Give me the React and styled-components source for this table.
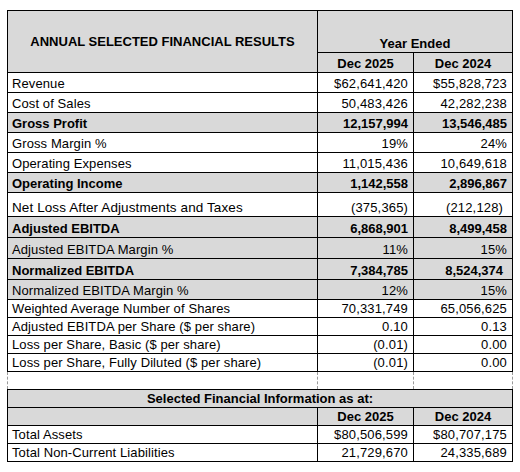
import React from "react";
import styled, { createGlobalStyle } from "styled-components";

const GlobalStyle = createGlobalStyle`
  body {
    margin: 0;
    background: #ffffff;
    font-family: "Liberation Sans", Arial, sans-serif;
  }
`;

const Page = styled.div`
  padding: 10px 0 0 7px;
`;

const Table = styled.table`
  border-collapse: collapse;
  table-layout: fixed;
  width: 505px;
  font-size: 13px;
  color: #000000;
`;

const Row = styled.tr`
  height: ${(p) => p.$h}px;
  background: ${(p) => (p.$shade ? "#d9d9d9" : "#ffffff")};
`;

const HeadCell = styled.th`
  background: #d9d9d9;
  border: 1px solid #000000;
  font-weight: 700;
  text-align: center;
  vertical-align: ${(p) => p.$valign || "bottom"};
  padding: 0 0 1px 0;
  white-space: nowrap;
`;

const Label = styled.td`
  border: 1px solid #000000;
  padding: 0 4px 1px 4px;
  text-align: left;
  vertical-align: bottom;
  white-space: nowrap;
  font-size: ${(p) => (p.$large ? 13.5 : 13)}px;
  letter-spacing: ${(p) => (p.$bold ? 0 : 0.1)}px;
  font-weight: ${(p) => (p.$bold ? 700 : 400)};
`;

const Num = styled.td`
  border: 1px solid #000000;
  padding: 0 ${(p) => (p.$inset ? 9 : 5)}px 1px 0;
  text-align: right;
  vertical-align: bottom;
  white-space: nowrap;
  letter-spacing: ${(p) => (p.$bold ? 0 : 0.15)}px;
  font-weight: ${(p) => (p.$bold ? 700 : 400)};
`;

const Spacer = styled.td`
  border-left: 1px dashed #9a9a9a;
  border-right: 1px dashed #9a9a9a;
  padding: 0;
`;

const rows = [
  { label: "Revenue", a: "$62,641,420", b: "$55,828,723", h: 20 },
  { label: "Cost of Sales", a: "50,483,426", b: "42,282,238", h: 20 },
  { label: "Gross Profit", a: "12,157,994", b: "13,546,485", h: 20, bold: true, shade: true },
  { label: "Gross Margin %", a: "19%", b: "24%", h: 20 },
  { label: "Operating Expenses", a: "11,015,436", b: "10,649,618", h: 20 },
  { label: "Operating Income", a: "1,142,558", b: "2,896,867", h: 20, bold: true, shade: true },
  { label: "Net Loss After Adjustments and Taxes", a: "(375,365)", b: "(212,128)", h: 24, large: true, bInset: true },
  { label: "Adjusted EBITDA", a: "6,868,901", b: "8,499,458", h: 21, bold: true, shade: true },
  { label: "Adjusted EBITDA Margin %", a: "11%", b: "15%", h: 21, shade: true },
  { label: "Normalized EBITDA", a: "7,384,785", b: "8,524,374", h: 21, bold: true, shade: true, bInset: true },
  { label: "Normalized EBITDA Margin %", a: "12%", b: "15%", h: 20, shade: true },
  { label: "Weighted Average Number of Shares", a: "70,331,749", b: "65,056,625", h: 18 },
  { label: "Adjusted EBITDA per Share ($ per share)", a: "0.10", b: "0.13", h: 18 },
  { label: "Loss per Share, Basic ($ per share)", a: "(0.01)", b: "0.00", h: 18 },
  { label: "Loss per Share, Fully Diluted ($ per share)", a: "(0.01)", b: "0.00", h: 18 },
];

const position = [
  { label: "Total Assets", a: "$80,506,599", b: "$80,707,175" },
  { label: "Total Non-Current Liabilities", a: "21,729,670", b: "24,335,689" },
];

const App = () => {
  return (
    <>
      <GlobalStyle />
      <Page>
        <Table>
          <colgroup>
            <col style={{ width: 310 }} />
            <col style={{ width: 96 }} />
            <col style={{ width: 99 }} />
          </colgroup>
          <tbody>
            <Row $h={42}>
              <HeadCell rowSpan={2} $valign="middle">
                ANNUAL SELECTED FINANCIAL RESULTS
              </HeadCell>
              <HeadCell colSpan={2}>Year Ended</HeadCell>
            </Row>
            <Row $h={20}>
              <HeadCell>Dec 2025</HeadCell>
              <HeadCell>Dec 2024</HeadCell>
            </Row>
            {rows.map((r) => (
              <Row key={r.label} $h={r.h} $shade={r.shade}>
                <Label $bold={r.bold} $large={r.large}>{r.label}</Label>
                <Num $bold={r.bold}>{r.a}</Num>
                <Num $bold={r.bold} $inset={r.bInset}>{r.b}</Num>
              </Row>
            ))}
            <Row $h={18}>
              <Spacer />
              <Spacer />
              <Spacer />
            </Row>
            <Row $h={18}>
              <HeadCell colSpan={3}>Selected Financial Information as at:</HeadCell>
            </Row>
            <Row $h={18}>
              <HeadCell />
              <HeadCell>Dec 2025</HeadCell>
              <HeadCell>Dec 2024</HeadCell>
            </Row>
            {position.map((r) => (
              <Row key={r.label} $h={18}>
                <Label>{r.label}</Label>
                <Num>{r.a}</Num>
                <Num>{r.b}</Num>
              </Row>
            ))}
          </tbody>
        </Table>
      </Page>
    </>
  );
};

export default App;
